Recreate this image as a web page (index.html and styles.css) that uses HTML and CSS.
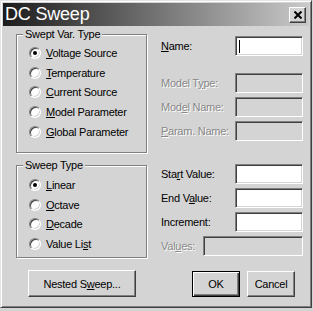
FILE: index.html
```html
<!DOCTYPE html>
<html lang="en">
<head>
    <meta charset="UTF-8">
    <title>DC Sweep</title>
    <link rel="stylesheet" href="styles.css">
</head>
<body>
    <div class="window">
        <div class="titlebar">
            <span class="title">DC Sweep</span>
            <span class="close">
                <svg width="8" height="8" viewBox="0 0 8 8"><path d="M0.5 0.5L7.5 7.5M7.5 0.5L0.5 7.5" stroke="#000" stroke-width="2"/></svg>
            </span>
        </div>
        <div class="dialog">
            <div class="left">
                <fieldset class="group group-var">
                    <legend>Swept Var. Type</legend>
                    <div class="radio-row"><span class="radio checked"></span><span><u>V</u>oltage Source</span></div>
                    <div class="radio-row"><span class="radio"></span><span><u>T</u>emperature</span></div>
                    <div class="radio-row"><span class="radio"></span><span><u>C</u>urrent Source</span></div>
                    <div class="radio-row"><span class="radio"></span><span><u>M</u>odel Parameter</span></div>
                    <div class="radio-row"><span class="radio"></span><span><u>G</u>lobal Parameter</span></div>
                </fieldset>
                <fieldset class="group group-sweep">
                    <legend>Sweep Type</legend>
                    <div class="radio-row"><span class="radio checked"></span><span><u>L</u>inear</span></div>
                    <div class="radio-row"><span class="radio"></span><span><u>O</u>ctave</span></div>
                    <div class="radio-row"><span class="radio"></span><span><u>D</u>ecade</span></div>
                    <div class="radio-row"><span class="radio"></span><span>Value Li<u>s</u>t</span></div>
                </fieldset>
            </div>
            <div class="right">
                <div class="field field-name"><label><u>N</u>ame:</label><span class="input"><span class="caret"></span></span></div>
                <div class="field field-model disabled"><label>Model T<u>y</u>pe:</label><span class="input"></span></div>
                <div class="field disabled"><label>Mod<u>e</u>l Name:</label><span class="input"></span></div>
                <div class="field disabled"><label><u>P</u>aram. Name:</label><span class="input"></span></div>
                <div class="field field-start"><label>Sta<u>r</u>t Value:</label><span class="input"></span></div>
                <div class="field"><label>End V<u>a</u>lue:</label><span class="input"></span></div>
                <div class="field"><label>Increment:</label><span class="input"></span></div>
                <div class="field disabled"><label>Val<u>u</u>es:</label><span class="input wide"></span></div>
            </div>
            <div class="left-buttons">
                <button class="btn nested">Nested S<u>w</u>eep...</button>
            </div>
            <div class="right-buttons">
                <button class="btn default">OK</button>
                <button class="btn">Cancel</button>
            </div>
        </div>
    </div>
</body>
</html>
```

FILE: styles.css
```css
body {
    margin: 0;
    background: #d4d4d4;
    font-family: "Liberation Sans", Arial, sans-serif;
    font-size: 11px;
    letter-spacing: -0.25px;
    color: #000;
}

.window {
    width: 312px;
    height: 308px;
    box-sizing: border-box;
    border: 1px solid;
    border-color: #e4e4e4 #404040 #404040 #e4e4e4;
    box-shadow: inset 1px 1px 0 #fff, inset -1px -1px 0 #808080;
    padding: 2px;
    background: #d4d4d4;
}

.titlebar {
    height: 23px;
    display: flex;
    align-items: center;
    justify-content: space-between;
    background: linear-gradient(to right, #1c1c1c, #cacaca);
}

.title {
    padding-left: 2px;
    color: #fff;
    font-size: 18px;
    letter-spacing: -0.2px;
}

.close {
    width: 17px;
    height: 16px;
    box-sizing: border-box;
    margin-right: 3px;
    display: flex;
    align-items: center;
    justify-content: center;
    background: #d4d4d4;
    border: 1px solid;
    border-color: #fff #404040 #404040 #fff;
    box-shadow: inset -1px -1px 0 #808080;
}

.dialog {
    display: grid;
    grid-template-columns: 131px 1fr;
    grid-template-rows: 242px 27px;
    column-gap: 14px;
    padding: 2px 6px 0 13px;
}

.group {
    margin: 0;
    width: 131px;
    box-sizing: border-box;
    border: 1px solid #808080;
    box-shadow: 1px 1px 0 #fff, inset 1px 1px 0 #fff;
    padding: 2px 0 10px 6px;
}

.group legend {
    padding: 0 2px;
    line-height: 13px;
    background: #d4d4d4;
}

.group-sweep {
    margin-top: 6px;
    padding-top: 4px;
    padding-bottom: 4px;
}

.radio-row {
    display: flex;
    align-items: center;
    height: 19.75px;
    padding-left: 6px;
    gap: 5px;
}

.group-sweep .radio-row {
    height: 19.4px;
}

.radio {
    position: relative;
    width: 12px;
    height: 12px;
    box-sizing: border-box;
    border-radius: 50%;
    border: 1px solid;
    border-color: #808080 #fff #fff #808080;
    background: #fff;
    box-shadow: inset 1px 1px 0 #404040, inset -1px -1px 0 #d4d4d4;
}

.radio.checked::after {
    content: "";
    position: absolute;
    left: 3px;
    top: 3px;
    width: 4px;
    height: 4px;
    border-radius: 50%;
    background: #000;
}

.right {
    display: flex;
    flex-direction: column;
    gap: 4px;
}

.field {
    display: flex;
    align-items: center;
    justify-content: space-between;
    height: 20px;
}

.field-name {
    margin-top: 8px;
}

.field-model {
    margin-top: 13px;
}

.field-start {
    margin-top: 19px;
}

.field.disabled label {
    color: #888;
    text-shadow: 1px 1px 0 #fff;
}

.input {
    width: 68px;
    height: 20px;
    box-sizing: border-box;
    display: flex;
    align-items: center;
    background: #fff;
    border: 1px solid;
    border-color: #808080 #fff #fff #808080;
    box-shadow: inset 1px 1px 0 #404040, inset -1px -1px 0 #d4d4d4;
}

.field.disabled .input {
    background: #d4d4d4;
}

.input.wide {
    width: 100px;
}

.caret {
    width: 1px;
    height: 13px;
    margin-left: 3px;
    background: #000;
}

.btn {
    font: inherit;
    letter-spacing: inherit;
    color: #000;
    padding: 0;
    background: #d4d4d4;
    border: 1px solid;
    border-color: #fff #404040 #404040 #fff;
    box-shadow: inset -1px -1px 0 #808080;
}

.left-buttons {
    display: flex;
    align-items: flex-end;
}

.nested {
    margin-left: 12px;
    width: 108px;
    height: 27px;
}

.right-buttons {
    display: flex;
    align-items: flex-end;
    gap: 7px;
    padding-left: 31px;
}

.right-buttons .btn {
    width: 48px;
    height: 26px;
}

.btn.default {
    border: 1px solid #000;
    box-shadow: inset 1px 1px 0 #fff, inset -1px -1px 0 #404040, inset -2px -2px 0 #808080;
}
```
